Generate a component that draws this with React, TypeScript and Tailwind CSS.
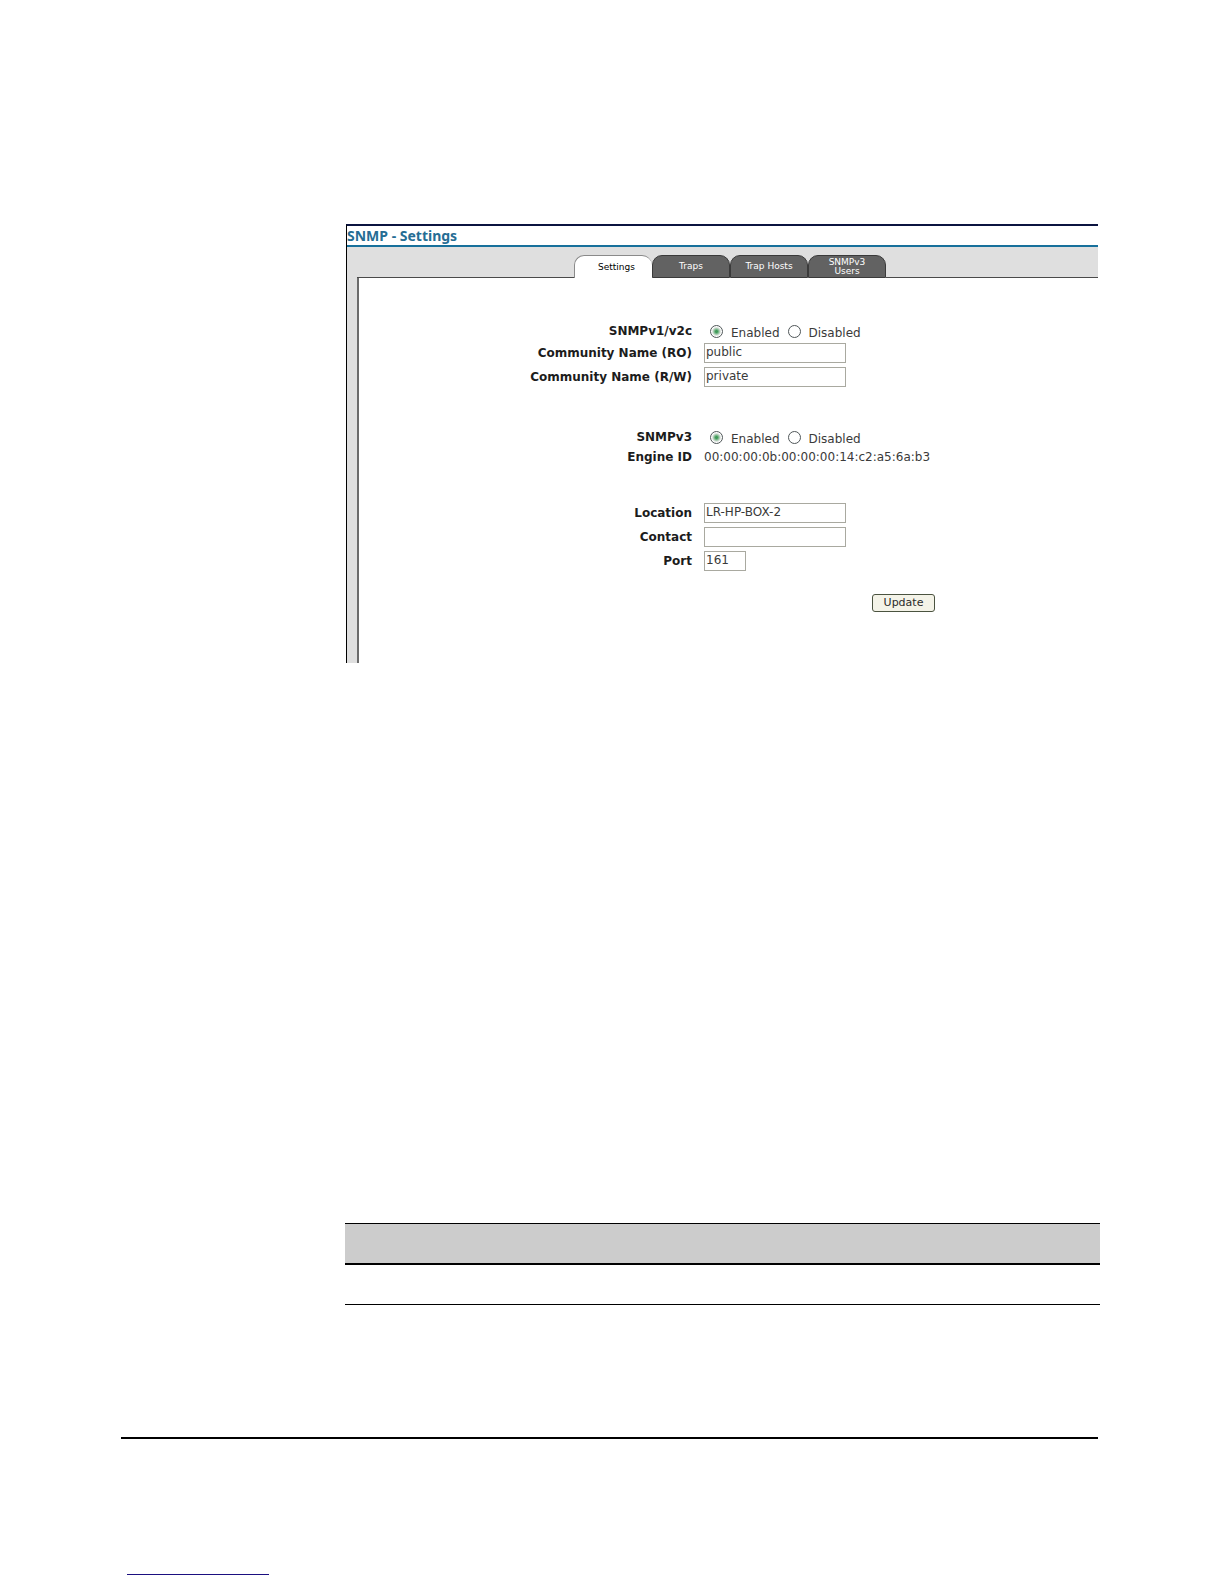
import { useState, ReactNode } from "react";
import { clsx } from "clsx";

const TABS = ["Settings", "Traps", "Trap Hosts", "SNMPv3 Users"];

interface RowProps {
  label: string;
  htmlFor?: string;
  compact?: boolean;
  children: ReactNode;
}

function Row({ label, htmlFor, compact, children }: RowProps) {
  return (
    <div className={clsx("flex items-center gap-3", compact ? "h-5" : "h-6")}>
      <label htmlFor={htmlFor} className="w-[333px] text-right font-bold text-[#1c1c1c]">
        {label}
      </label>
      {children}
    </div>
  );
}

interface TextFieldProps {
  id: string;
  value: string;
  onChange: (value: string) => void;
  short?: boolean;
}

function TextField({ id, value, onChange, short }: TextFieldProps) {
  return (
    <input
      id={id}
      type="text"
      value={value}
      onChange={(e) => onChange(e.target.value)}
      className={clsx(
        "h-5 border border-[#a9a9a0] bg-white px-px pb-0.5 text-[#3a3a3a] outline-none",
        short ? "w-[42px]" : "w-[142px]"
      )}
    />
  );
}

interface ToggleProps {
  name: string;
  enabled: boolean;
  onChange: (enabled: boolean) => void;
}

function Toggle({ name, enabled, onChange }: ToggleProps) {
  const radio =
    "size-[13px] appearance-none rounded-full border border-[#4f5658] bg-white checked:bg-[radial-gradient(circle,#3f9a58_0,#3f9a58_1px,#dfe5e0_4px,#ffffff_5px)]";

  return (
    <div className="flex gap-2 pl-1.5 text-[#3a3a3a]">
      <label className="flex items-center gap-2">
        <input
          type="radio"
          name={name}
          checked={enabled}
          onChange={() => onChange(true)}
          className={radio}
        />
        <span className="pt-1">Enabled</span>
      </label>
      <label className="flex items-center gap-2">
        <input
          type="radio"
          name={name}
          checked={!enabled}
          onChange={() => onChange(false)}
          className={radio}
        />
        <span className="pt-1">Disabled</span>
      </label>
    </div>
  );
}

function TabStrip() {
  const [active, setActive] = useState("Settings");

  return (
    <div className="ml-2.5 flex h-[31px] items-end">
      <div className="w-[217px] self-stretch border-b border-[#4a4a4a]" />
      {TABS.map((tab) => (
        <button
          key={tab}
          onClick={() => setActive(tab)}
          className={clsx(
            "flex h-[23px] w-[78px] items-center justify-center rounded-t-[10px] border-t border-l pr-2.5 text-[9px] leading-[9px]",
            active === tab
              ? "border-[#8a8a8a] bg-white pl-4 text-black"
              : "border-r border-b border-[#3a3a3a] bg-[#626262] pl-2.5 text-white"
          )}
        >
          {tab}
        </button>
      ))}
      <div className="flex-1 self-stretch border-b border-[#4a4a4a]" />
    </div>
  );
}

function SnmpSettings() {
  const [v1Enabled, setV1Enabled] = useState(true);
  const [v3Enabled, setV3Enabled] = useState(true);
  const [readName, setReadName] = useState("public");
  const [writeName, setWriteName] = useState("private");
  const [location, setLocation] = useState("LR-HP-BOX-2");
  const [contact, setContact] = useState("");
  const [port, setPort] = useState("161");

  return (
    <section className="mr-[126px] ml-[346px] border-t-2 border-l border-t-[#0b1440] border-l-black font-['DejaVu_Sans',sans-serif] text-[12px] leading-4">
      <h1 className="h-[21px] border-b-2 border-[#17709b] font-['Noto_Sans',sans-serif] text-[14px] leading-5 font-bold text-[#256d94]">
        SNMP - Settings
      </h1>
      <div className="bg-[#dfdfdf]">
        <TabStrip />
        <form
          onSubmit={(e) => e.preventDefault()}
          className="ml-2.5 border-l-2 border-[#6b6b6b] bg-white pt-[43px] pb-[51px]"
        >
          <Row label="SNMPv1/v2c" compact>
            <Toggle name="v1" enabled={v1Enabled} onChange={setV1Enabled} />
          </Row>
          <Row label="Community Name (RO)" htmlFor="ro">
            <TextField id="ro" value={readName} onChange={setReadName} />
          </Row>
          <Row label="Community Name (R/W)" htmlFor="rw">
            <TextField id="rw" value={writeName} onChange={setWriteName} />
          </Row>

          <div className="mt-[38px]">
            <Row label="SNMPv3" compact>
              <Toggle name="v3" enabled={v3Enabled} onChange={setV3Enabled} />
            </Row>
            <Row label="Engine ID" compact>
              <span className="text-[#3a3a3a]">
                00:00:00:0b:00:00:00:14:c2:a5:6a:b3
              </span>
            </Row>
          </div>

          <div className="mt-[34px]">
            <Row label="Location" htmlFor="location">
              <TextField id="location" value={location} onChange={setLocation} />
            </Row>
            <Row label="Contact" htmlFor="contact">
              <TextField id="contact" value={contact} onChange={setContact} />
            </Row>
            <Row label="Port" htmlFor="port">
              <TextField id="port" value={port} onChange={setPort} short />
            </Row>
          </div>

          <button
            type="submit"
            className="mt-[21px] ml-[513px] flex h-[18px] w-[63px] items-center justify-center rounded-[3px] border border-[#4b5340] bg-[#f4f3e8] text-[11px] text-[#2a2a2a]"
          >
            Update
          </button>
        </form>
      </div>
    </section>
  );
}

export default function App() {
  return (
    <main className="min-h-screen bg-white pt-56 pb-2">
      <SnmpSettings />

      <div className="mt-[560px] mr-[124px] ml-[345px]">
        <table className="w-full border-collapse">
          <thead>
            <tr className="h-10 border-t border-b-2 border-black bg-[#cccccc]">
              <th />
            </tr>
          </thead>
          <tbody>
            <tr className="h-[41px] border-b border-black">
              <td />
            </tr>
          </tbody>
        </table>
      </div>

      <footer className="mt-33 mr-[126px] ml-[121px] border-t-2 border-black pt-[135px]">
        <div className="ml-1.5 w-[142px] border-b border-[#1b0f80]" />
      </footer>
    </main>
  );
}
